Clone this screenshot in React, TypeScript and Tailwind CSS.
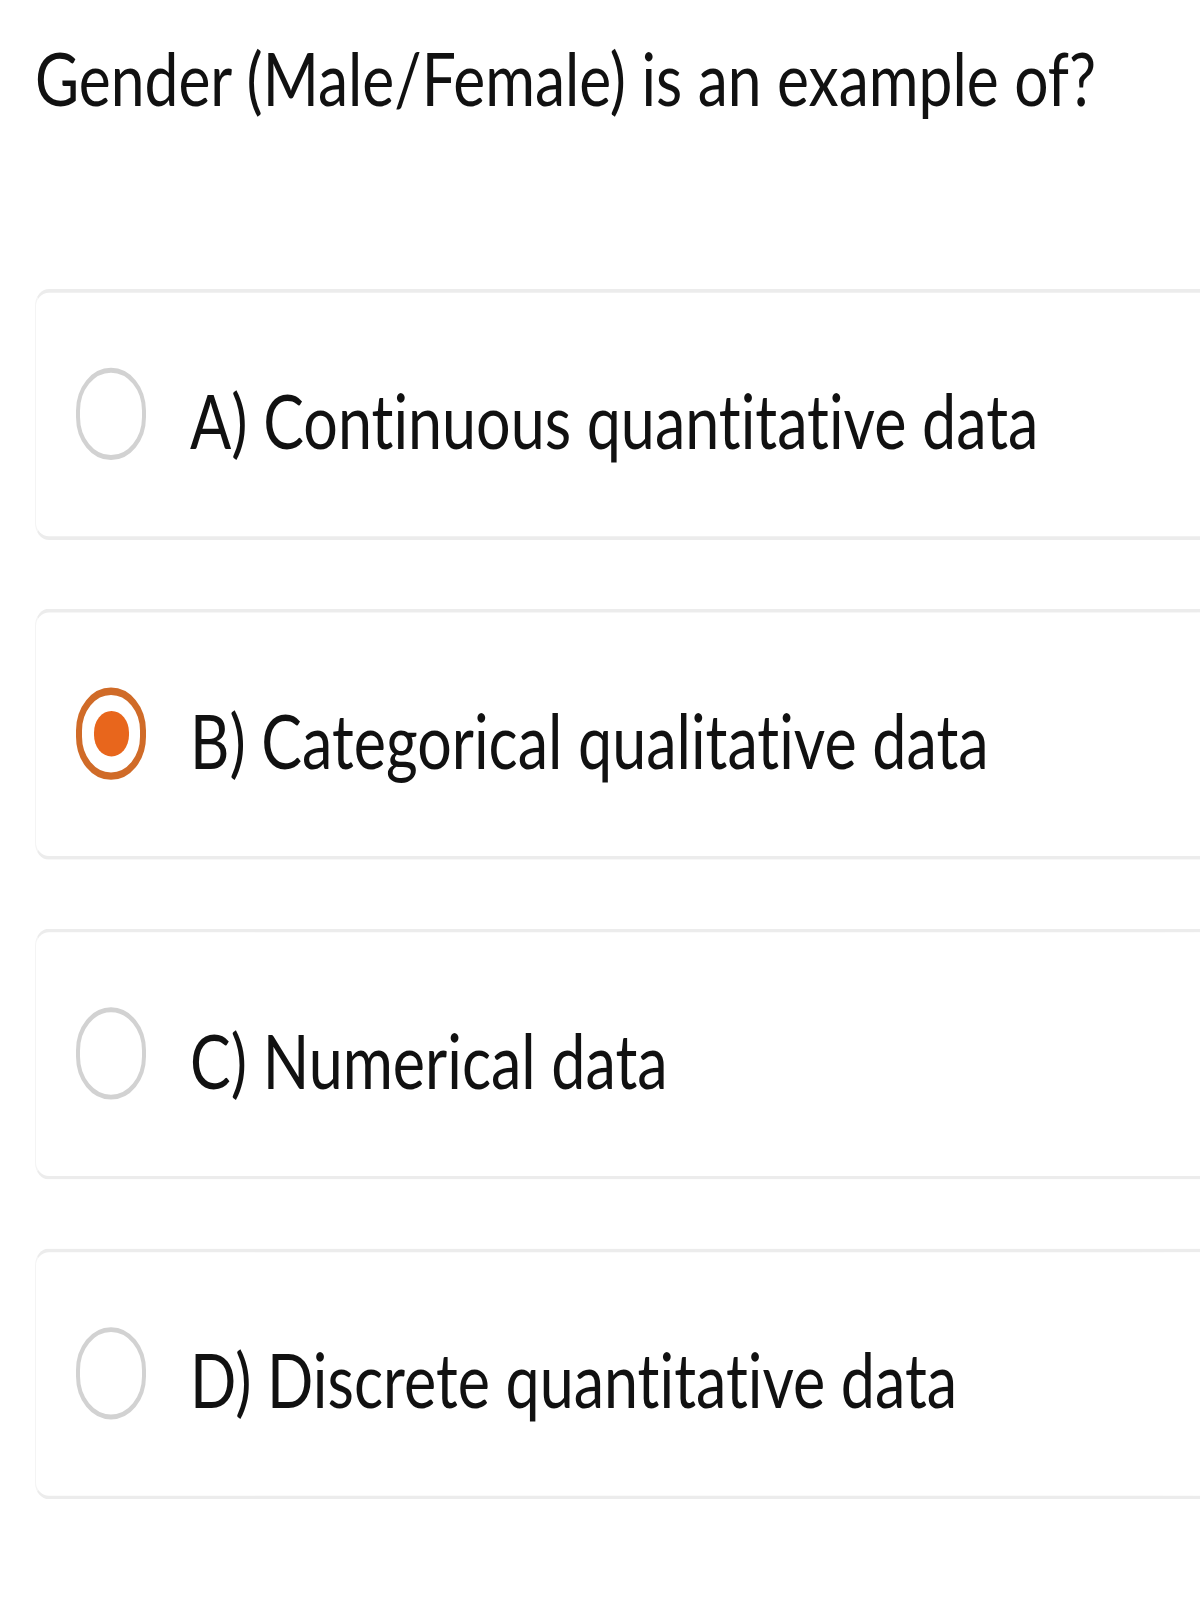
import React from "react";

const options = [
  { label: "A) Continuous quantitative data", selected: false },
  { label: "B) Categorical qualitative data", selected: true },
  { label: "C) Numerical data", selected: false },
  { label: "D) Discrete quantitative data", selected: false },
];

function Radio({ selected }: { selected: boolean }) {
  if (selected) {
    return (
      <div className="flex h-[75px] w-[70px] shrink-0 items-center justify-center rounded-full border-[6px] border-[#d06b28]">
        <div className="h-[37px] w-[35px] rounded-full bg-[#e8661c]" />
      </div>
    );
  }
  return <div className="h-[75px] w-[70px] shrink-0 rounded-full border-[4px] border-[#d2d2d2]" />;
}

export default function App() {
  return (
    <div className="w-[1200px] h-[1600px] overflow-hidden bg-white">
      <div className="w-[1200px] origin-top scale-y-[1.23] font-['Lato',sans-serif] text-[#111111] [font-variant-ligatures:none]">
        <h1 className="pl-[35px] pt-[33px] text-[60.5px] font-normal leading-none">
          Gender (Male/Female) is an example of?
        </h1>
        <div className="mt-[141px] flex flex-col gap-[56px] pl-[35px]">
          {options.map((o) => (
            <div
              key={o.label}
              className="flex h-[204px] w-[1200px] items-center gap-[44px] rounded-l-[14px] border-y-[3px] border-l border-[#ececec] border-l-[#f4f4f4] pl-[40px]"
            >
              <Radio selected={o.selected} />
              <span className="mt-[9px] text-[61px] leading-none">{o.label}</span>
            </div>
          ))}
        </div>
      </div>
    </div>
  );
}
